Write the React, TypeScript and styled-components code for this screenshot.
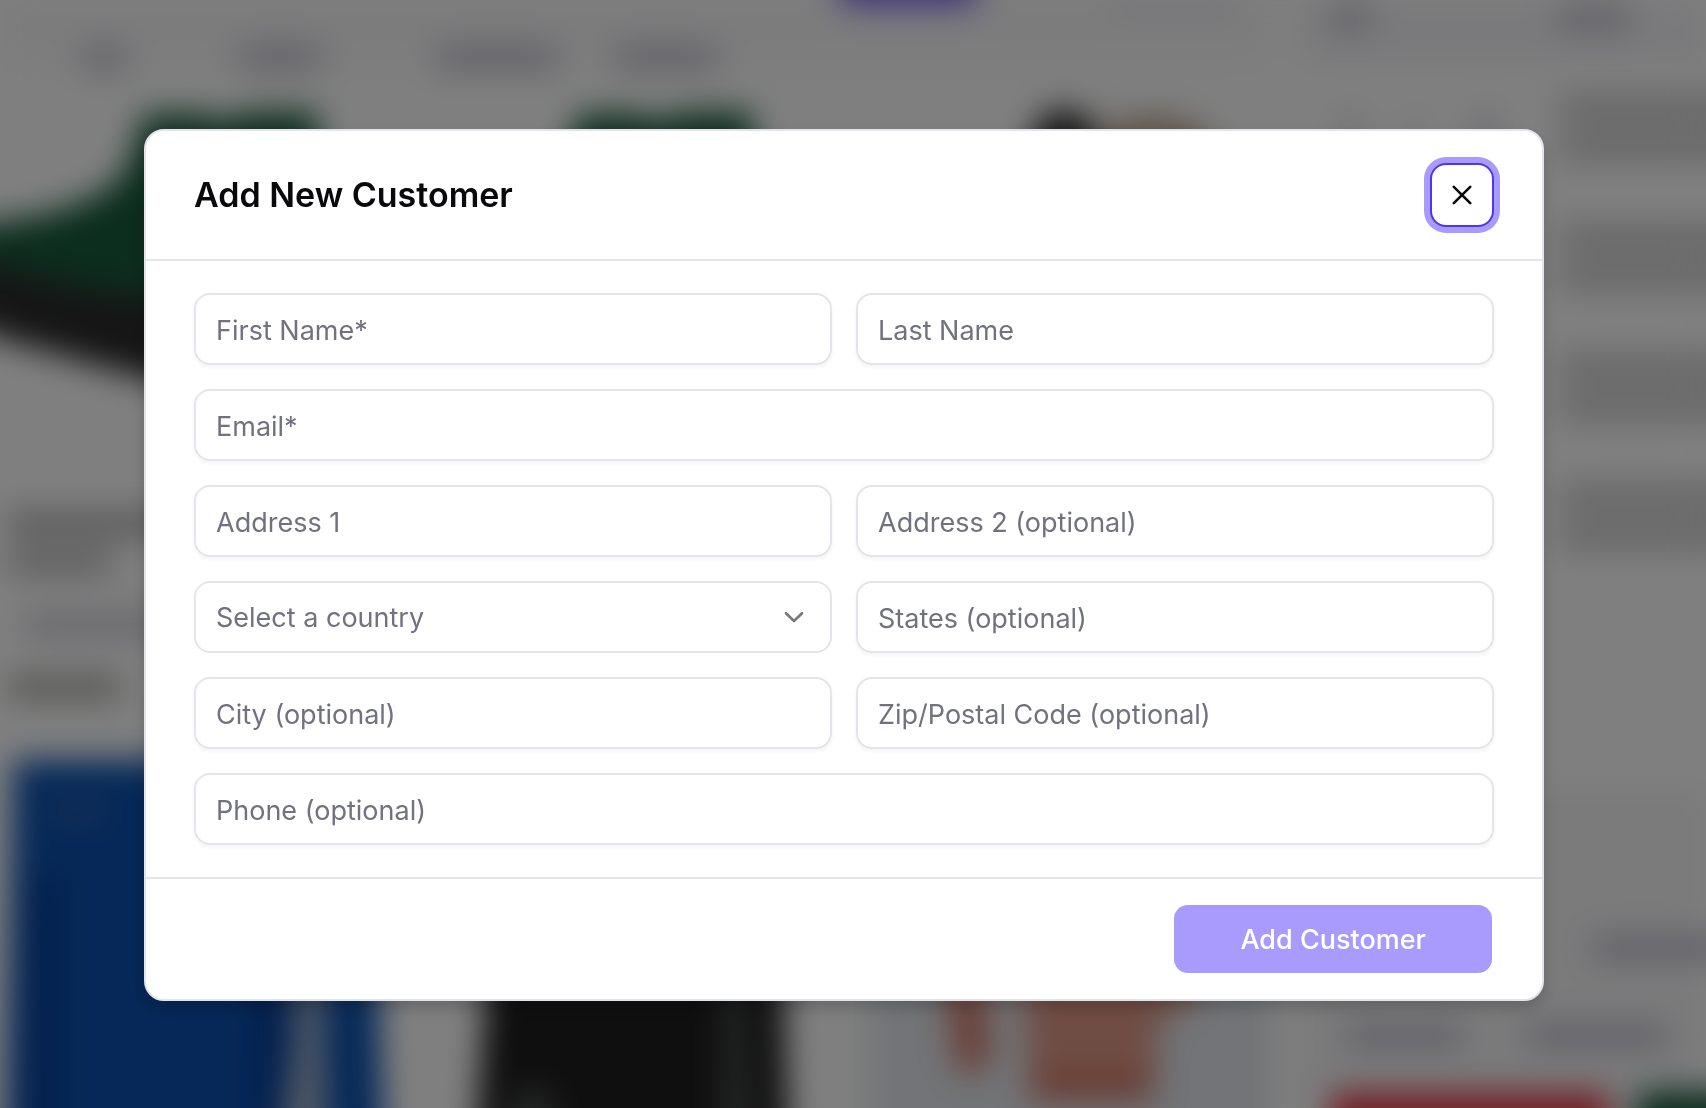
import React from "react";
import styled, { createGlobalStyle } from "styled-components";

const GlobalStyle = createGlobalStyle`
  *, *::before, *::after { box-sizing: border-box; }
  html, body { margin: 0; height: 100%; overflow: hidden; background: #ffffff; }
  body, button, input, select { font-family: Inter, "Liberation Sans", sans-serif; }
`;

const line = "#e4e4eb";

/* ---------- Store page behind the dialog ---------- */

const Viewport = styled.div`
  height: 100vh;
  overflow: hidden;
`;

const Store = styled.div`
  display: flex;
  height: 100%;
  background: #ffffff;
  filter: blur(16px);
`;

const Catalog = styled.main`
  flex: 1;
  min-width: 0;
  display: flex;
  flex-direction: column;
  padding-right: 30px;
`;

const TopBar = styled.div`
  display: flex;
  flex: none;
  justify-content: flex-end;
  height: 28px;
  gap: 136px;
  padding-right: 36px;
  background: #f8f8fa;
`;

const Pill = styled.div`
  width: 140px;
  height: 64px;
  margin-top: -58px;
  border-radius: 12px;
  background: #7c68f0;
`;

const Filters = styled.div`
  display: flex;
  flex: none;
  align-items: center;
  height: 60px;
  margin-bottom: 12px;
  padding-left: 82px;
  background: linear-gradient(#f8f8fa, #ffffff);
`;

const Bar = styled.div<{ $w: string; $h?: number; $tone?: string; $ml?: number }>`
  flex: none;
  width: ${(p) => p.$w};
  height: ${(p) => p.$h ?? 24}px;
  margin-left: ${(p) => p.$ml ?? 0}px;
  border-radius: 6px;
  background: ${(p) => p.$tone ?? "#c4c1cf"};
`;

const Products = styled.div`
  display: grid;
  grid-template-columns: repeat(3, 1fr);
  gap: 35px;
`;

const Product = styled.article`
  display: flex;
  flex-direction: column;
`;

const Photo = styled.svg`
  display: block;
  width: 100%;
  aspect-ratio: 1;
  overflow: visible;
`;

const Caption = styled.div`
  display: flex;
  flex-direction: column;
  justify-content: space-between;
  height: 255px;
  padding: 12px 0 56px 8px;
`;

const CaptionTitle = styled.div`
  display: flex;
  flex-direction: column;
  gap: 14px;
`;

const Cart = styled.aside`
  flex: none;
  display: flex;
  flex-direction: column;
  width: 406px;
`;

const CartHead = styled.div`
  display: flex;
  flex: none;
  align-items: center;
  height: 62px;
  padding: 0 0 26px 30px;
  background: #f5f5f9;
`;

const CartItem = styled.div`
  display: flex;
  flex: none;
  align-items: center;
  height: 130px;
  padding-left: 38px;
`;

const CartText = styled.div`
  display: flex;
  flex-direction: column;
  flex: 1;
  gap: 14px;
  margin-left: 62px;
`;

const CartTotals = styled.div`
  display: flex;
  flex-direction: column;
  flex: 1;
  justify-content: flex-end;
  gap: 64px;
  margin-top: 208px;
  background: #f6f6f8;
`;

const CartRow = styled.div`
  display: flex;
`;

const CartActions = styled.div`
  display: flex;
  gap: 26px;
  margin: -20px 0 -60px;
  padding-left: 30px;
`;

const CartAction = styled.div<{ $tone: string }>`
  flex: none;
  width: 280px;
  height: 76px;
  border-radius: 12px;
  background: ${(p) => p.$tone};
`;

const Boot = () => (
  <Photo viewBox="0 0 400 400" aria-hidden="true">
    <path d="M144 14H206L224 22L246 12H318V255L0 200L-50 190V130L0 122C60 114 118 96 130 60Z" fill="#185c3d" />
    <path d="M-50 150L0 166L80 186L220 206L330 206V280H150L0 238L-50 214Z" fill="#2c2c2c" />
  </Photo>
);

const Shoe = () => (
  <Photo viewBox="0 0 400 400" aria-hidden="true">
    <path d="M160 60Q160 10 194 10Q224 12 224 40L240 300H160Z" fill="#282828" />
    <path d="M226 30Q290 0 340 34L360 240H240Z" fill="#bfa893" />
  </Photo>
);

const Jeans = () => (
  <Photo viewBox="0 0 400 400" aria-hidden="true">
    <path d="M14 5H370L384 400H324L308 150L282 400H6Z" fill="#0c51b0" />
    <path d="M32 120H54V400H28ZM260 150H284L280 400H256Z" fill="#083a92" />
    <path d="M300 150H322L328 400H288Z" fill="#a6b4cc" />
    <path d="M54 50H100V60H54Z" fill="#5c70a8" />
  </Photo>
);

const Trousers = () => (
  <Photo viewBox="0 0 400 400" aria-hidden="true">
    <path d="M60 5H340L354 400H40L52 220Z" fill="#1e1e20" />
    <path d="M288 180H306L320 400H286Z" fill="#4a4c4c" />
    <path d="M80 335H114L124 400H74Z" fill="#505252" />
  </Photo>
);

const Outfit = () => (
  <Photo viewBox="0 0 400 400" aria-hidden="true">
    <rect width="400" height="400" fill="#e4e8ee" />
    <path d="M72 200H112L122 300Q104 336 84 306Z" fill="#d58070" />
    <path d="M146 80H320L330 240L292 262L280 345H160L154 250Z" fill="#df9a88" />
    <path d="M162 318H284V346H162Z" fill="#d27866" />
  </Photo>
);

const StorePage = () => (
  <Viewport aria-hidden="true">
    <Store>
      <Catalog>
        <TopBar>
          <Pill />
          <Bar $w="120px" $h={6} $tone="#c8c8da" />
        </TopBar>
        <Filters>
          <Bar $w="44px" />
          <Bar $w="84px" $ml={112} />
          <Bar $w="122px" $ml={114} />
          <Bar $w="104px" $ml={56} />
        </Filters>
        <Products>
          <Product>
            <Boot />
            <Caption>
              <CaptionTitle>
                <Bar $w="280px" $tone="#b0b0b0" />
                <Bar $w="104px" $tone="#b8b8b8" />
              </CaptionTitle>
              <Bar $w="260px" $ml={16} $tone="#d0cfda" />
              <Bar $w="112px" $tone="#acaca8" />
            </Caption>
            <Jeans />
          </Product>
          <Product>
            <Boot />
            <Caption />
            <Trousers />
          </Product>
          <Product>
            <Shoe />
            <Caption />
            <Outfit />
          </Product>
        </Products>
      </Catalog>
      <Cart>
        <CartHead>
          <Bar $w="42px" />
          <Bar $w="72px" $ml={186} />
        </CartHead>
        {[0, 1, 2, 3].map((n) => (
          <CartItem key={n}>
            <Bar $w="24px" $tone="#dedee8" />
            <Bar $w="14px" $ml={46} $tone="#e4e4e4" />
            <Bar $w="24px" $ml={52} $tone="#d4d4e2" />
            <CartText>
              <Bar $w="200px" $tone="#c6c6c6" />
              <Bar $w="200px" $tone="#c6c6c6" />
            </CartText>
          </CartItem>
        ))}
        <CartTotals>
          <CartRow>
            <Bar $w="160px" $ml={292} />
          </CartRow>
          <CartRow>
            <Bar $w="120px" $ml={44} />
            <Bar $w="142px" $ml={62} />
          </CartRow>
          <CartActions>
            <CartAction $tone="#e0404a" />
            <CartAction $tone="#12563a" />
          </CartActions>
        </CartTotals>
      </Cart>
    </Store>
  </Viewport>
);

/* ---------- Dialog ---------- */

const Overlay = styled.div`
  position: fixed;
  inset: 0;
  display: flex;
  align-items: center;
  justify-content: center;
  padding: 22px 18px 0 0;
  background: rgba(0, 0, 0, 0.5);
`;

const Dialog = styled.form`
  width: calc(100% - 48px);
  max-width: 1400px;
  border: 2px solid ${line};
  border-radius: 20px;
  background: #ffffff;
  box-shadow: 0 8px 16px rgba(0, 0, 0, 0.18);
`;

const Header = styled.header`
  display: flex;
  align-items: center;
  justify-content: space-between;
  padding: 32px 48px;
  border-bottom: 2px solid ${line};
`;

const Title = styled.h2`
  margin: 0;
  font-size: 34px;
  font-weight: 600;
  line-height: 40px;
  color: #09090b;
`;

const CloseButton = styled.button`
  display: grid;
  place-items: center;
  width: 64px;
  height: 64px;
  padding: 0;
  border: 2px solid #4f35f3;
  border-radius: 16px;
  background: #ffffff;
  color: #09090b;
  box-shadow: 0 0 0 6px #a89bfd;
  outline: none;
  cursor: pointer;
`;

const Fields = styled.div`
  display: grid;
  grid-template-columns: 1fr 1fr;
  gap: 24px;
  padding: 32px 48px;
`;

const Input = styled.input<{ $wide?: boolean }>`
  grid-column: ${(p) => (p.$wide ? "1 / -1" : "auto")};
  width: 100%;
  min-width: 0;
  height: 72px;
  padding: 2px 20px 0;
  border: 2px solid ${line};
  border-radius: 16px;
  background: #ffffff;
  color: #09090b;
  font-size: 27px;
  box-shadow: 0 2px 4px rgba(0, 0, 0, 0.05);
  outline: none;

  &::placeholder {
    color: #71717f;
    opacity: 1;
  }
  &:focus {
    border-color: #4f35f3;
  }
`;

const SelectBox = styled.div`
  display: grid;
  align-items: center;

  & > * {
    grid-area: 1 / 1;
  }
`;

const Select = styled.select`
  appearance: none;
  width: 100%;
  height: 72px;
  padding: 0 64px 0 20px;
  border: 2px solid ${line};
  border-radius: 16px;
  background: #ffffff;
  color: #71717f;
  font-size: 27px;
  outline: none;
`;

const Chevron = styled.svg`
  justify-self: end;
  margin-right: 22px;
  pointer-events: none;
`;

const Footer = styled.footer`
  display: flex;
  justify-content: flex-end;
  padding: 24px 48px;
  border-top: 2px solid ${line};
`;

const SubmitButton = styled.button`
  height: 72px;
  padding: 0 66px;
  border: 2px solid transparent;
  border-radius: 16px;
  background: #a89bfd;
  background-clip: padding-box;
  color: #ffffff;
  font-size: 27px;
  font-weight: 500;
  cursor: pointer;
`;

type Field = { name: string; text: string; type?: string; wide?: boolean };

const nameFields: Field[] = [
  { name: "firstName", text: "First Name*" },
  { name: "lastName", text: "Last Name" },
  { name: "email", text: "Email*", type: "email", wide: true },
  { name: "address1", text: "Address 1" },
  { name: "address2", text: "Address 2 (optional)" },
];

const placeFields: Field[] = [
  { name: "state", text: "States (optional)" },
  { name: "city", text: "City (optional)" },
  { name: "zip", text: "Zip/Postal Code (optional)" },
  { name: "phone", text: "Phone (optional)", type: "tel", wide: true },
];

const renderField = (f: Field) => (
  <Input
    key={f.name}
    name={f.name}
    type={f.type ?? "text"}
    placeholder={f.text}
    aria-label={f.text}
    $wide={f.wide}
  />
);

export default function App() {
  return (
    <>
      <GlobalStyle />
      <StorePage />
      <Overlay>
        <Dialog
          role="dialog"
          aria-modal="true"
          aria-labelledby="dialog-title"
          onSubmit={(e) => e.preventDefault()}
        >
          <Header>
            <Title id="dialog-title">Add New Customer</Title>
            <CloseButton type="button" aria-label="Close">
              <svg width="20" height="20" viewBox="0 0 20 20" fill="none" aria-hidden="true">
                <path
                  d="M1.8 1.8L18.2 18.2M18.2 1.8L1.8 18.2"
                  stroke="currentColor"
                  strokeWidth="2.6"
                  strokeLinecap="round"
                />
              </svg>
            </CloseButton>
          </Header>
          <Fields>
            {nameFields.map(renderField)}
            <SelectBox>
              <Select name="country" aria-label="Country" defaultValue="">
                <option value="">Select a country</option>
              </Select>
              <Chevron width="32" height="32" viewBox="0 0 32 32" fill="none" aria-hidden="true">
                <path
                  d="M8 12.2L16 20L24 12.2"
                  stroke="#77777a"
                  strokeWidth="2.6"
                  strokeLinecap="round"
                  strokeLinejoin="round"
                />
              </Chevron>
            </SelectBox>
            {placeFields.map(renderField)}
          </Fields>
          <Footer>
            <SubmitButton type="submit">Add Customer</SubmitButton>
          </Footer>
        </Dialog>
      </Overlay>
    </>
  );
}
